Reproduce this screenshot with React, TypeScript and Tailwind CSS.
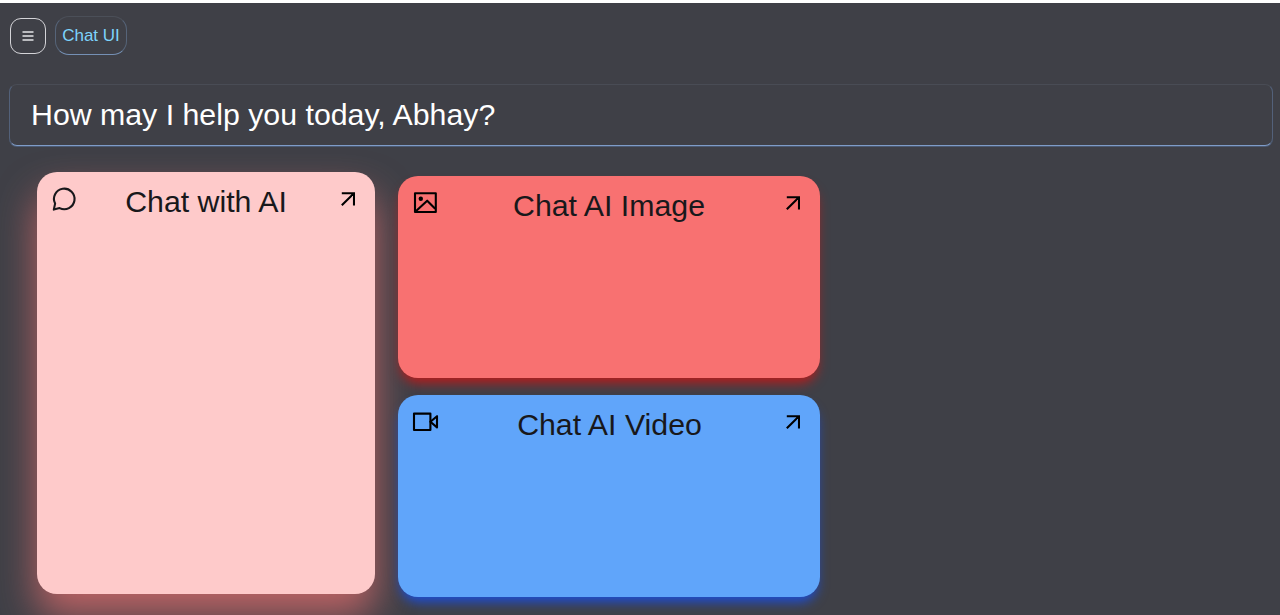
import React from "react";

function Arrow() {
  return (
    <svg className="block h-[14px] w-[14px]" viewBox="0 0 14 14" fill="none" stroke="#000" strokeWidth="2.1">
      <path d="M.8 1.3h12.2V13.4M13 1.3 .8 13.2" />
    </svg>
  );
}

function ChatIcon() {
  return (
    <svg className="block h-[26px] w-[26px]" viewBox="0 0 26 26" fill="none" stroke="#18181b" strokeWidth="2.1" strokeLinejoin="round">
      <path d="M8.6 22.1A10.3 10.3 0 1 0 4.1 17.6L2.8 23.6z" />
    </svg>
  );
}

function ImageIcon() {
  return (
    <svg className="block h-[26px] w-[26px]" viewBox="0 0 26 26" fill="none" stroke="#000" strokeWidth="2.1" strokeLinejoin="round">
      <rect x="3" y="3.2" width="20.8" height="18.8" />
      <path d="m3.8 21.3 11.4-10.6 8 8" />
      <circle cx="8.8" cy="8.8" r="2.2" fill="#000" stroke="none" />
    </svg>
  );
}

function VideoIcon() {
  return (
    <svg className="block h-[26px] w-[27px]" viewBox="0 0 27 26" fill="none" stroke="#000" strokeWidth="2.1" strokeLinejoin="round">
      <rect x="2" y="4.6" width="16.4" height="16.4" />
      <path d="m18.4 12.8 6.6-5.6v11.2z" />
    </svg>
  );
}

function Card({ title, icon, className }: { title: string; icon: React.ReactNode; className: string }) {
  return (
    <section className={"flex items-start justify-between rounded-[20px] " + className}>
      {icon}
      <h2 className="-mt-[2px] pr-[6px] text-[30.3px] leading-[36px] text-zinc-900">{title}</h2>
      <div className="pt-[6px]">
        <Arrow />
      </div>
    </section>
  );
}

export default function App() {
  return (
    <div className="h-[615px] overflow-hidden border-t-[3px] border-white bg-[#3f4047] pl-[9px] pr-[7px] font-['Liberation_Sans',Arial,sans-serif]">
      <header className="flex items-center gap-[9px] pl-px pt-[13px]">
        <button className="flex h-9 w-9 items-center justify-center rounded-[11px] border border-zinc-300 text-zinc-200">
          <svg className="h-3 w-3" viewBox="0 0 12 12" stroke="currentColor" strokeWidth="1.3">
            <path d="M.5 2h11M.5 6h11M.5 10h11" />
          </svg>
        </button>
        <div className="flex h-[39px] w-[72px] items-center justify-center rounded-[14px] border border-t-[#4b4f58] border-x-[#566479] border-b-[#7590b5] text-[17px] text-[#7dd3fc]">
          Chat UI
        </div>
      </header>
      <div className="mt-[29px] flex h-[62px] items-center rounded-[8px] border border-t-[#494c55] border-x-[#53617a] border-b-[#7f9cc8] pl-[21px] shadow-[0_1px_0_rgba(96,140,200,0.35)]">
        <h1 className="text-[30.3px] text-white">How may I help you today, Abhay?</h1>
      </div>
      <main className="flex gap-[23px] pl-[28px] pt-[26px]">
        <Card
          title="Chat with AI"
          icon={<ChatIcon />}
          className="h-[422px] w-[338px] bg-[#fecaca] pl-[14px] pr-[20px] pt-[14px] shadow-[0_22px_38px_rgba(240,112,112,0.7)]"
        />
        <div className="flex flex-col gap-[17px] pt-[4px]">
          <Card
            title="Chat AI Image"
            icon={<ImageIcon />}
            className="h-[202px] w-[422px] bg-[#f87171] pl-[14px] pr-[20px] pt-[14px] shadow-[0_8px_12px_-3px_rgba(185,28,28,1)]"
          />
          <Card
            title="Chat AI Video"
            icon={<VideoIcon />}
            className="h-[202px] w-[422px] bg-[#60a5fa] pl-[14px] pr-[20px] pt-[14px] shadow-[0_8px_12px_-3px_rgba(29,78,216,1)]"
          />
        </div>
      </main>
    </div>
  );
}
